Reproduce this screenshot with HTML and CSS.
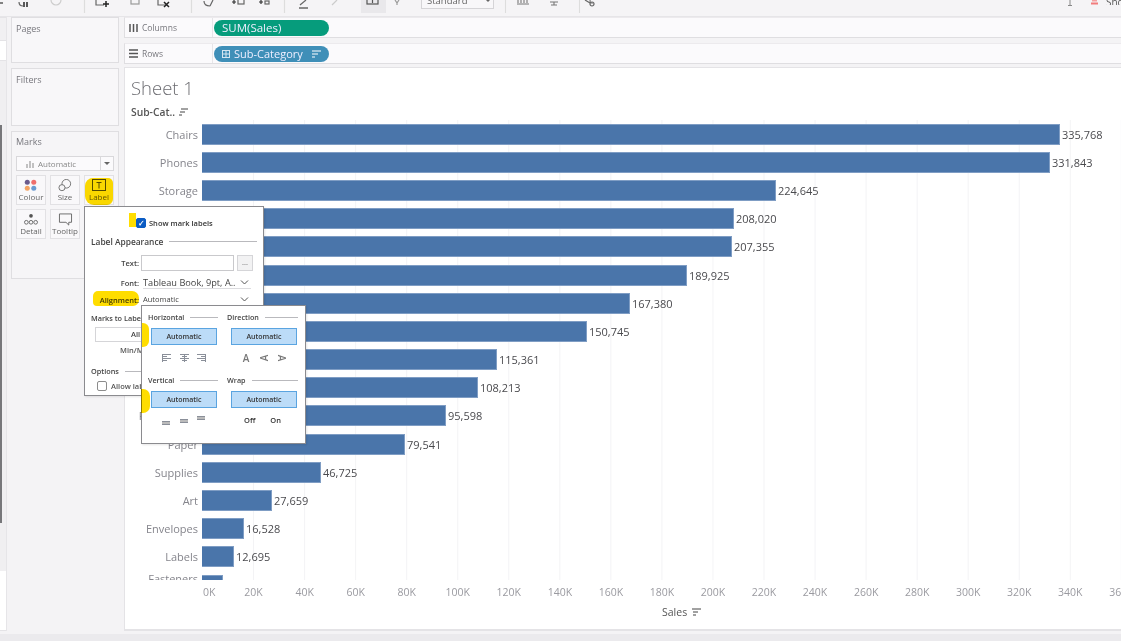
FILE: index.html
```html
<!DOCTYPE html>
<html lang="en">
<head>
<meta charset="utf-8">
<title>Sheet 1</title>
<link rel="stylesheet" href="styles.css">
</head>
<body>
<header class="toolbar">
  <svg class="tb-strip" width="420" height="16" viewBox="0 0 420 16" fill="none" stroke="#666" stroke-width="1.2">
    <path d="M0 3h3" stroke="#333"/>
    <path d="M19 2c0 3 2 4 4 4" />
    <path d="M24 2v5M27 2v5" stroke="#333" stroke-width="1.6"/>
    <circle cx="56" cy="0" r="5" stroke="#ccc"/>
    <path d="M84.500 0v13" stroke="#ddd"/>
    <path d="M96 0v5h8" /><path d="M103 4h6M106 1v6" stroke="#222" stroke-width="1.5"/>
    <rect x="131" y="-3" width="8" height="7" stroke="#999"/>
    <path d="M158 0v5h8" /><path d="M164 2l5 5M169 2l-5 5" stroke="#222" stroke-width="1.5"/>
    <path d="M191.500 0v13" stroke="#ddd"/>
    <path d="M204 1c0 4 3 5 6 5M213 0l-3 6" />
    <path d="M232 2h4M234 0v4" stroke="#333"/><rect x="238" y="-1" width="6" height="5"/>
    <path d="M259 2h4M261 0v4" stroke="#333"/><rect x="265" y="1" width="4" height="3"/>
    <path d="M284.500 0v13" stroke="#ddd"/>
    <path d="M300 5l6-5" /><path d="M299 8h9" stroke="#444"/>
    <path d="M332 5l5-5" stroke="#ccc"/>
    <rect x="361" y="0" width="25" height="13" fill="#e9e8eb" stroke="none"/>
    <rect x="367" y="-4" width="11" height="8" stroke="#555"/><path d="M372.500 0v3" stroke="#555"/>
    <path d="M395 0l2 3 2-3M397 3v2" stroke="#999"/>
  </svg>
  <div class="tb-select">Standard<span class="tb-caret"></span></div>
  <svg class="tb-strip tb-right" width="100" height="16" viewBox="0 0 100 16" fill="none" stroke="#777" stroke-width="1.100">
    <path d="M12.500 0v13" stroke="#ddd"/>
    <path d="M24 4h12M25 0v3M28 0v3M31 0v3M34 0v3" />
    <path d="M57 2h8M61 2v3M58 5h6" />
    <path d="M86.500 0v13" stroke="#ddd"/>
    <circle cx="99" cy="1" r="2"/>
  </svg>
  <svg class="tb-strip tb-link" width="14" height="16" viewBox="0 0 14 16" fill="none" stroke="#666" stroke-width="1.200"><path d="M2 0l5 3"/><circle cx="9" cy="4" r="2"/></svg>
  <div class="tb-end">
    <svg width="6" height="16" viewBox="0 0 6 16" fill="none" stroke="#888"><path d="M3 0v5M1 5.500h4"/></svg>
    <svg class="tb-show" width="8" height="16" viewBox="0 0 8 16"><rect x="1" width="5" height="1.500" fill="#f5a0a0"/><rect y="2.500" width="7" height="2" fill="#f27c7c"/></svg>
    <span class="tb-show-text">Show</span>
  </div>
</header>

<main class="workspace">
  <div class="gutter">
    <div class="gutter-top"></div>
    <div class="gutter-white"></div>
    <div class="gutter-mid"><div class="gutter-line"></div></div>
    <div class="gutter-white gutter-low"></div>
  </div>

  <aside class="cards">
    <section class="card card-pages"><h2 class="card-title">Pages</h2></section>
    <section class="card card-filters"><h2 class="card-title">Filters</h2></section>
    <section class="card card-marks">
      <h2 class="card-title">Marks</h2>
      <div class="marks-select">
        <svg width="8" height="8" viewBox="0 0 8 8" stroke="#888" stroke-width="1"><path d="M1 8V4M4 8V1M7 8V3"/></svg>
        <span class="marks-select-text">Automatic</span>
        <span class="marks-select-btn"></span>
      </div>
      <div class="marks-grid">
        <div class="mark-btn">
          <svg width="16" height="14" viewBox="0 0 16 14"><circle cx="4" cy="3.500" r="2.700" fill="#6a5a8c"/><circle cx="11" cy="3.500" r="2.700" fill="#ef6f6c"/><circle cx="4" cy="10" r="2.700" fill="#f4a261"/><circle cx="11" cy="10" r="2.700" fill="#6a9bd1"/></svg>
          <span>Colour</span>
        </div>
        <div class="mark-btn">
          <svg width="16" height="15" viewBox="0 0 16 15" fill="none" stroke="#666"><circle cx="9.500" cy="5.500" r="5"/><circle cx="4.500" cy="10" r="3.500" fill="#f6f5f7"/></svg>
          <span>Size</span>
        </div>
        <div class="mark-btn">
          <svg width="14" height="13" viewBox="0 0 14 13" fill="none" stroke="#555"><rect x=".5" y=".5" width="13" height="11"/><path d="M4.500 3.500h5M7 3.500v6"/></svg>
          <span>Label</span>
        </div>
        <div class="mark-btn">
          <svg width="16" height="14" viewBox="0 0 16 14" fill="none" stroke="#666"><circle cx="8" cy="3" r="2" fill="#555" stroke="none"/><circle cx="3" cy="10" r="2"/><circle cx="8" cy="10" r="2"/><circle cx="13" cy="10" r="2"/></svg>
          <span>Detail</span>
        </div>
        <div class="mark-btn">
          <svg width="15" height="14" viewBox="0 0 15 14" fill="none" stroke="#666"><path d="M1 1h13v9h-3v3l-3-3H1z"/></svg>
          <span>Tooltip</span>
        </div>
      </div>
    </section>
  </aside>

  <div class="content">
    <div class="shelf">
      <div class="shelf-label">
        <svg width="9" height="9" viewBox="0 0 9 9" stroke="#555" stroke-width="1.500"><path d="M1 1v8M4.500 1v8M8 1v8"/></svg>
        <span>Columns</span>
      </div>
      <div class="pill pill-green">SUM(Sales)</div>
    </div>
    <div class="shelf shelf-rows">
      <div class="shelf-label">
        <svg width="9" height="9" viewBox="0 0 9 9" stroke="#555" stroke-width="1.300"><path d="M0 1h9M0 4.500h9M0 8h9"/></svg>
        <span>Rows</span>
      </div>
      <div class="pill pill-blue">
        <svg width="8" height="8" viewBox="0 0 8 8" fill="none" stroke="#d6e6f0"><rect x=".5" y=".5" width="7" height="7"/><path d="M4 .5v7M.5 4h7"/></svg>
        <span class="pill-text">Sub-Category</span>
        <svg width="9" height="8" viewBox="0 0 9 8" stroke="#fff" stroke-width="1.100"><path d="M0 1h9M0 4h6M0 7h3"/></svg>
      </div>
    </div>

    <section class="sheet">
      <h1 class="sheet-title">Sheet 1</h1>
      <div class="col-head">
        <span>Sub-Cat..</span>
        <svg width="9" height="8" viewBox="0 0 9 8" stroke="#444" stroke-width="1"><path d="M2 1h7M1 4h5M0 7h3"/></svg>
      </div>
      <div class="chart">
        <div class="row"><span class="row-label">Chairs</span><span class="bar" style="width:858px"></span><span class="val">335,768</span></div>
        <div class="row"><span class="row-label">Phones</span><span class="bar" style="width:848px"></span><span class="val">331,843</span></div>
        <div class="row"><span class="row-label">Storage</span><span class="bar" style="width:574px"></span><span class="val">224,645</span></div>
        <div class="row"><span class="row-label">Tables</span><span class="bar" style="width:532px"></span><span class="val">208,020</span></div>
        <div class="row"><span class="row-label">Binders</span><span class="bar" style="width:530px"></span><span class="val">207,355</span></div>
        <div class="row"><span class="row-label">Machines</span><span class="bar" style="width:485px"></span><span class="val">189,925</span></div>
        <div class="row"><span class="row-label">Accessories</span><span class="bar" style="width:428px"></span><span class="val">167,380</span></div>
        <div class="row"><span class="row-label">Copiers</span><span class="bar" style="width:385px"></span><span class="val">150,745</span></div>
        <div class="row"><span class="row-label">Bookcases</span><span class="bar" style="width:295px"></span><span class="val">115,361</span></div>
        <div class="row"><span class="row-label">Appliances</span><span class="bar" style="width:276px"></span><span class="val">108,213</span></div>
        <div class="row"><span class="row-label">Furnishings</span><span class="bar" style="width:244px"></span><span class="val">95,598</span></div>
        <div class="row"><span class="row-label">Paper</span><span class="bar" style="width:203px"></span><span class="val">79,541</span></div>
        <div class="row"><span class="row-label">Supplies</span><span class="bar" style="width:119px"></span><span class="val">46,725</span></div>
        <div class="row"><span class="row-label">Art</span><span class="bar" style="width:70px"></span><span class="val">27,659</span></div>
        <div class="row"><span class="row-label">Envelopes</span><span class="bar" style="width:42px"></span><span class="val">16,528</span></div>
        <div class="row"><span class="row-label">Labels</span><span class="bar" style="width:32px"></span><span class="val">12,695</span></div>
        <div class="row"><span class="row-label row-label-cut">Fasteners</span><span class="bar" style="width:21px"></span></div>
      </div>
      <div class="axis">
        <span class="tick tick-zero">0K</span><span class="tick">20K</span><span class="tick">40K</span><span class="tick">60K</span><span class="tick">80K</span><span class="tick">100K</span><span class="tick">120K</span><span class="tick">140K</span><span class="tick">160K</span><span class="tick">180K</span><span class="tick">200K</span><span class="tick">220K</span><span class="tick">240K</span><span class="tick">260K</span><span class="tick">280K</span><span class="tick">300K</span><span class="tick">320K</span><span class="tick">340K</span><span class="tick">360K</span>
      </div>
      <div class="axis-title">
        <span>Sales</span>
        <svg width="9" height="8" viewBox="0 0 9 8" stroke="#444" stroke-width="1"><path d="M0 1h9M1 4h5M1 7h3"/></svg>
      </div>
    </section>
  </div>
</main>
<footer class="statusbar"></footer>

<div class="popup popup-label">
  <label class="show-row"><span class="check check-on">✓</span><span>Show mark labels</span></label>
  <div class="heading heading-appearance"><span>Label Appearance</span></div>
  <div class="form-row form-text"><span class="form-key">Text:</span><span class="input"></span><span class="dots">...</span></div>
  <div class="form-row form-font"><span class="form-key">Font:</span><span class="select">Tableau Book, 9pt, A..<svg class="chev" width="9" height="5" viewBox="0 0 9 5" fill="none" stroke="#555"><path d="M1 .5l3.500 3.500L8 .5"/></svg></span></div>
  <div class="form-row form-align"><span class="form-key">Alignment:</span><span class="select">Automatic<svg class="chev" width="9" height="5" viewBox="0 0 9 5" fill="none" stroke="#555"><path d="M1 .5l3.500 3.500L8 .5"/></svg></span></div>
  <div class="heading heading-marks"><span>Marks to Label</span></div>
  <div class="all-box">All</div>
  <div class="minmax">Min/Max</div>
  <div class="heading heading-options"><span>Options</span></div>
  <label class="allow-row"><span class="check"></span><span>Allow labels to overlap</span></label>
</div>

<div class="popup popup-align">
  <div class="align-col">
    <div class="heading"><span>Horizontal</span></div>
    <div class="auto-btn">Automatic</div>
    <div class="icon-row icon-row-h">
      <svg width="9" height="8" viewBox="0 0 9 8" stroke="#8a8f99"><path d="M0 .5h9M0 2.500h5M0 4.500h9M0 6.500h5M.5 0v8"/></svg>
      <svg width="9" height="8" viewBox="0 0 9 8" stroke="#8a8f99"><path d="M0 .5h9M2 2.500h5M0 4.500h9M2 6.500h5M4.500 0v8"/></svg>
      <svg width="9" height="8" viewBox="0 0 9 8" stroke="#8a8f99"><path d="M0 .5h9M4 2.500h5M0 4.500h9M4 6.500h5M8.500 0v8"/></svg>
    </div>
  </div>
  <div class="align-col">
    <div class="heading"><span>Direction</span></div>
    <div class="auto-btn">Automatic</div>
    <div class="icon-row icon-row-d">
      <span class="dir">A</span><span class="dir dir-left">A</span><span class="dir dir-right">A</span>
    </div>
  </div>
  <div class="align-col">
    <div class="heading"><span>Vertical</span></div>
    <div class="auto-btn">Automatic</div>
    <div class="icon-row icon-row-v">
      <span class="vbar vbar-low"></span><span class="vbar vbar-mid"></span><span class="vbar vbar-high"></span>
    </div>
  </div>
  <div class="align-col">
    <div class="heading"><span>Wrap</span></div>
    <div class="auto-btn">Automatic</div>
    <div class="icon-row icon-row-w"><span>Off</span><span>On</span></div>
  </div>
</div>

<span class="hl hl-label"></span>
<span class="hl hl-show"></span>
<span class="hl hl-alignment"></span>
<span class="hl hl-h"></span>
<span class="hl hl-v"></span>
</body>
</html>
```

FILE: styles.css
```css
* { box-sizing: border-box; }
html, body { margin: 0; padding: 0; }
body {
  position: relative;
  width: 1121px;
  height: 641px;
  overflow: hidden;
  display: flex;
  flex-direction: column;
  background: #f4f3f5;
  font-family: "Open Sans", "Liberation Sans", sans-serif;
  color: #555;
}
h1, h2 { margin: 0; font-weight: 400; }

/* toolbar */
.toolbar {
  height: 17px;
  flex: none;
  display: flex;
  align-items: flex-start;
  overflow: hidden;
  border-bottom: 1px solid #e6e5e8;
  background: #f5f4f6;
}
.tb-strip { display: block; flex: none; }
.tb-select {
  width: 73px;
  height: 9px;
  margin-left: 1px;
  padding-left: 5px;
  display: flex;
  justify-content: space-between;
  background: #f8f7f9;
  border: 1px solid #d5d4d7;
  border-top: 0;
  font-size: 9.500px;
  line-height: 2px;
  color: #666;
}
.tb-caret {
  width: 0; height: 0;
  margin: 0 3px;
  border-left: 2px solid transparent;
  border-right: 2px solid transparent;
  border-top: 2px solid #666;
}
.tb-right { margin-left: -1px; }
.tb-link { margin-left: -10px; }
.tb-end { margin-left: auto; display: flex; align-items: flex-start; }
.tb-show { margin-left: 18px; }
.tb-show-text { margin-left: 7px; width: 15px; overflow: hidden; font-size: 10px; line-height: 5px; color: #555; }

/* workspace */
.workspace { flex: 1; min-height: 0; display: flex; }
.gutter { width: 7px; flex: none; display: flex; flex-direction: column; border-right: 1px solid #e6e5e8; }
.gutter-top { height: 24px; background: #f1f0f2; border-top: 1px solid #e4e3e6; border-bottom: 1px solid #e4e3e6; }
.gutter-white { height: 20px; background: #fff; border-bottom: 1px solid #e4e3e6; }
.gutter-mid { flex: 1; background: #f0eff1; padding-top: 64px; padding-bottom: 48px; }
.gutter-line { width: 2px; height: 100%; background: #77777a; }
.gutter-low { height: 60px; }

.cards { width: 117px; flex: none; padding: 0 5px 0 4px; display: flex; flex-direction: column; gap: 5px; }
.card { background: #f6f5f7; border: 1px solid #dfdee1; padding: 5px 4px; }
.card-pages { height: 46px; background: #f8f7f9; }
.card-filters { height: 58px; background: #f8f7f9; }
.card-marks { height: 148px; padding-top: 4px; }
.card-title { font-size: 9px; line-height: 12px; color: #77777d; }

.marks-select {
  height: 15px;
  margin-top: 8px;
  display: flex;
  align-items: center;
  padding-left: 9px;
  background: #fbfafc;
  border: 1px solid #d9d8db;
}
.marks-select-text { margin-left: 4px; font-size: 8px; color: #888; flex: 1; }
.marks-select-btn { width: 13px; height: 100%; border-left: 1px solid #d9d8db; position: relative; }
.marks-select-btn::after {
  content: "";
  position: absolute;
  left: 3px; top: 5px;
  border-left: 3px solid transparent;
  border-right: 3px solid transparent;
  border-top: 3px solid #666;
}
.marks-grid { margin-top: 4px; display: grid; grid-template-columns: repeat(3, 30px); grid-auto-rows: 30px; gap: 4px; }
.mark-btn {
  display: flex;
  flex-direction: column;
  align-items: center;
  justify-content: space-between;
  padding: 3px 0 2px;
  background: #f9f8fa;
  border: 1px solid #e2e1e4;
  font-size: 8px;
  line-height: 10px;
  color: #666;
}

/* shelves */
.content { flex: 1; min-width: 0; display: flex; flex-direction: column; }
.shelf {
  height: 21px;
  margin-bottom: 5px;
  display: flex;
  align-items: center;
  background: #fbfafc;
  border-bottom: 1px solid #dfdee1;
  border-top: 1px solid #eceaed;
  border-left: 1px solid #dfdee1;
}
.shelf-rows { margin-bottom: 3px; }
.shelf-label {
  width: 88px;
  height: 100%;
  flex: none;
  display: flex;
  align-items: center;
  gap: 4px;
  padding-left: 4px;
  border-right: 1px solid #e6e5e8;
  font-size: 8.500px;
  color: #77777d;
}
.pill {
  width: 115px;
  height: 16px;
  margin-left: 1px;
  display: flex;
  align-items: center;
  padding-left: 8px;
  border-radius: 8px;
  font-size: 11.500px;
  color: #eef;
}
.pill-green { background: #069c7c; }
.pill-blue { background: #3f8fb8; font-size: 11px; }
.pill-text { margin: 0 9px 0 4px; }

/* sheet */
.sheet {
  flex: 1;
  min-height: 0;
  overflow: hidden;
  background: #fff;
  border-left: 1px solid #e4e3e6;
  border-top: 1px solid #e4e3e6;
  border-bottom: 2px solid #e4e3e6;
}
.sheet-title { margin: 7px 0 0 6px; font-size: 18.500px; line-height: 26px; font-weight: 300; color: #6d6d72; }
.col-head { margin: 5px 0 0 6px; height: 12px; display: flex; align-items: center; gap: 4px; font-size: 10.300px; font-weight: 600; color: #555; }
.chart {
  height: 460px;
  margin-top: 2px;
  overflow: hidden;
  display: grid;
  grid-auto-rows: 28.200px;
  background:
    linear-gradient(#fff, #fff) 0 0 / 78px 100% no-repeat,
    linear-gradient(to right, #f3f3f5 1px, transparent 1px) 77px 0 / 51.050px 100% repeat-x;
}
.row { display: flex; align-items: center; }
.row-label { width: 73px; flex: none; text-align: right; font-size: 11px; color: #85858c; white-space: nowrap; }
.row-label-cut { margin-bottom: 14px; }
.bar {
  height: 21px;
  margin-left: 4px;
  flex: none;
  background: #4a75aa;
  border: 1px solid #7f9dc4;
  border-width: 1px 1px 1px 0;
}
.val { margin-left: 2px; font-size: 11px; color: #4a4a4e; }

.axis { display: flex; margin-top: 4px; padding-left: 52px; height: 16px; white-space: nowrap; }
.tick { width: 51.050px; flex: none; text-align: center; font-size: 10.500px; line-height: 16px; color: #9a9aa0; }
.tick-zero { text-align: left; padding-left: 26px; }
.axis-title { margin-top: 5px; margin-left: 537px; display: flex; align-items: center; gap: 5px; font-size: 10.500px; line-height: 14px; color: #555; }

.statusbar { height: 10px; flex: none; background: #ebeaed; border-top: 3px solid #f4f3f5; }

/* popups */
.popup { position: absolute; background: #fff; border: 1px solid #8b8b8f; font-size: 7.500px; color: #333; }
.popup-label { left: 84px; top: 206px; width: 180px; height: 190px; padding: 0 6px; box-shadow: 1px 1px 2px rgba(0,0,0,.1); }
.show-row { display: flex; align-items: center; gap: 3px; margin: 10px 0 0 45px; height: 11px; font-weight: 600; }
.check { width: 10px; height: 10px; display: block; border: 1px solid #8c8c8c; border-radius: 2px; background: #fff; font-size: 8px; line-height: 8px; text-align: center; flex: none; }
.check-on { background: #0b5cc4; border-color: #0b5cc4; color: #fff; }
.heading { display: flex; align-items: center; gap: 6px; font-weight: 600; line-height: 11px; color: #444; font-size: 7.200px; }
.heading::after { content: ""; flex: 1; height: 1px; background: #b9b9bd; }
.popup-label > .heading-appearance { margin-top: 8px; font-size: 8.400px; }
.form-row { display: flex; align-items: center; }
.form-key { width: 48px; flex: none; text-align: right; font-weight: 600; color: #444; }
.form-text { margin-top: 8px; height: 16px; }
.input { width: 93px; height: 16px; margin-left: 2px; border: 1px solid #c9c9cc; }
.dots { width: 16px; height: 16px; margin-left: 3px; background: #f2f2f3; border: 1px solid #d5d5d8; line-height: 12px; text-align: center; color: #666; }
.select { width: 108px; height: 13px; margin-left: 4px; display: flex; align-items: center; justify-content: space-between; padding-right: 2px; border-bottom: 1px solid #dcdcdf; color: #444; white-space: nowrap; }
.form-font { margin-top: 5px; height: 13px; }
.form-font .select { font-size: 9.200px; }
.form-align { margin-top: 4px; height: 13px; }
.popup-label > .heading-marks { margin-top: 7px; font-size: 7.300px; }
.all-box { width: 165px; height: 15px; margin: 3px 0 0 4px; border: 1px solid #d5d5d8; padding-left: 35px; line-height: 13px; font-weight: 600; color: #444; }
.minmax { margin: 3px 0 0 29px; line-height: 11px; font-weight: 600; color: #555; }
.popup-label > .heading-options { margin-top: 10px; font-size: 7.300px; }
.allow-row { display: flex; align-items: center; gap: 4px; margin: 3px 0 0 6px; height: 11px; font-weight: 600; white-space: nowrap; color: #555; }

.popup-align {
  left: 141px; top: 305px; width: 165px; height: 139px;
  padding: 6px 7px 0 6px;
  display: grid;
  grid-template-columns: 70px 1fr;
  column-gap: 9px;
  grid-auto-rows: 63px;
  box-shadow: 1px 1px 2px rgba(0,0,0,.1);
}
.auto-btn {
  width: 66px; height: 17px;
  margin: 5px 0 0 3px;
  background: #bcdcf8;
  border: 1px solid #5aa4e0;
  font-weight: 600;
  font-size: 7px;
  line-height: 15px;
  text-align: center;
  color: #333;
}
.align-col:nth-child(even) .auto-btn { margin-left: 4px; }
.icon-row { margin-top: 6px; display: flex; align-items: center; height: 14px; }
.icon-row-h { gap: 8.500px; padding-left: 14px; }
.icon-row-d { gap: 10px; padding-left: 15px; font-size: 10px; color: #777; font-weight: 600; }
.dir { display: block; width: 8px; text-align: center; }
.dir-left { transform: rotate(-90deg); }
.dir-right { transform: rotate(90deg); }
.icon-row-v { gap: 9.500px; padding-left: 14px; align-items: flex-start; }
.vbar { display: block; width: 8px; height: 4px; border-top: 1px solid #8a8f99; border-bottom: 1px solid #8a8f99; background: #bbb; }
.vbar-low { margin-top: 7px; }
.vbar-mid { margin-top: 5px; }
.vbar-high { margin-top: 2px; }
.icon-row-w { gap: 15px; padding-left: 17px; font-weight: 600; margin-top: 5px; }

/* yellow marker strokes drawn over the shot */
.hl { position: absolute; background: #ffdd00; mix-blend-mode: multiply; }
.hl-label { left: 85px; top: 178px; width: 28px; height: 27px; border-radius: 8px 5px 6px 9px; }
.hl-show { left: 129px; top: 213px; width: 7px; height: 14px; }
.hl-alignment { left: 93px; top: 291px; width: 46px; height: 15px; border-radius: 5px 7px 6px 4px; }
.hl-h { left: 142px; top: 323px; width: 7px; height: 24px; border-radius: 0 6px 6px 0; }
.hl-v { left: 141px; top: 389px; width: 9px; height: 24px; border-radius: 0 7px 7px 0; }
```
